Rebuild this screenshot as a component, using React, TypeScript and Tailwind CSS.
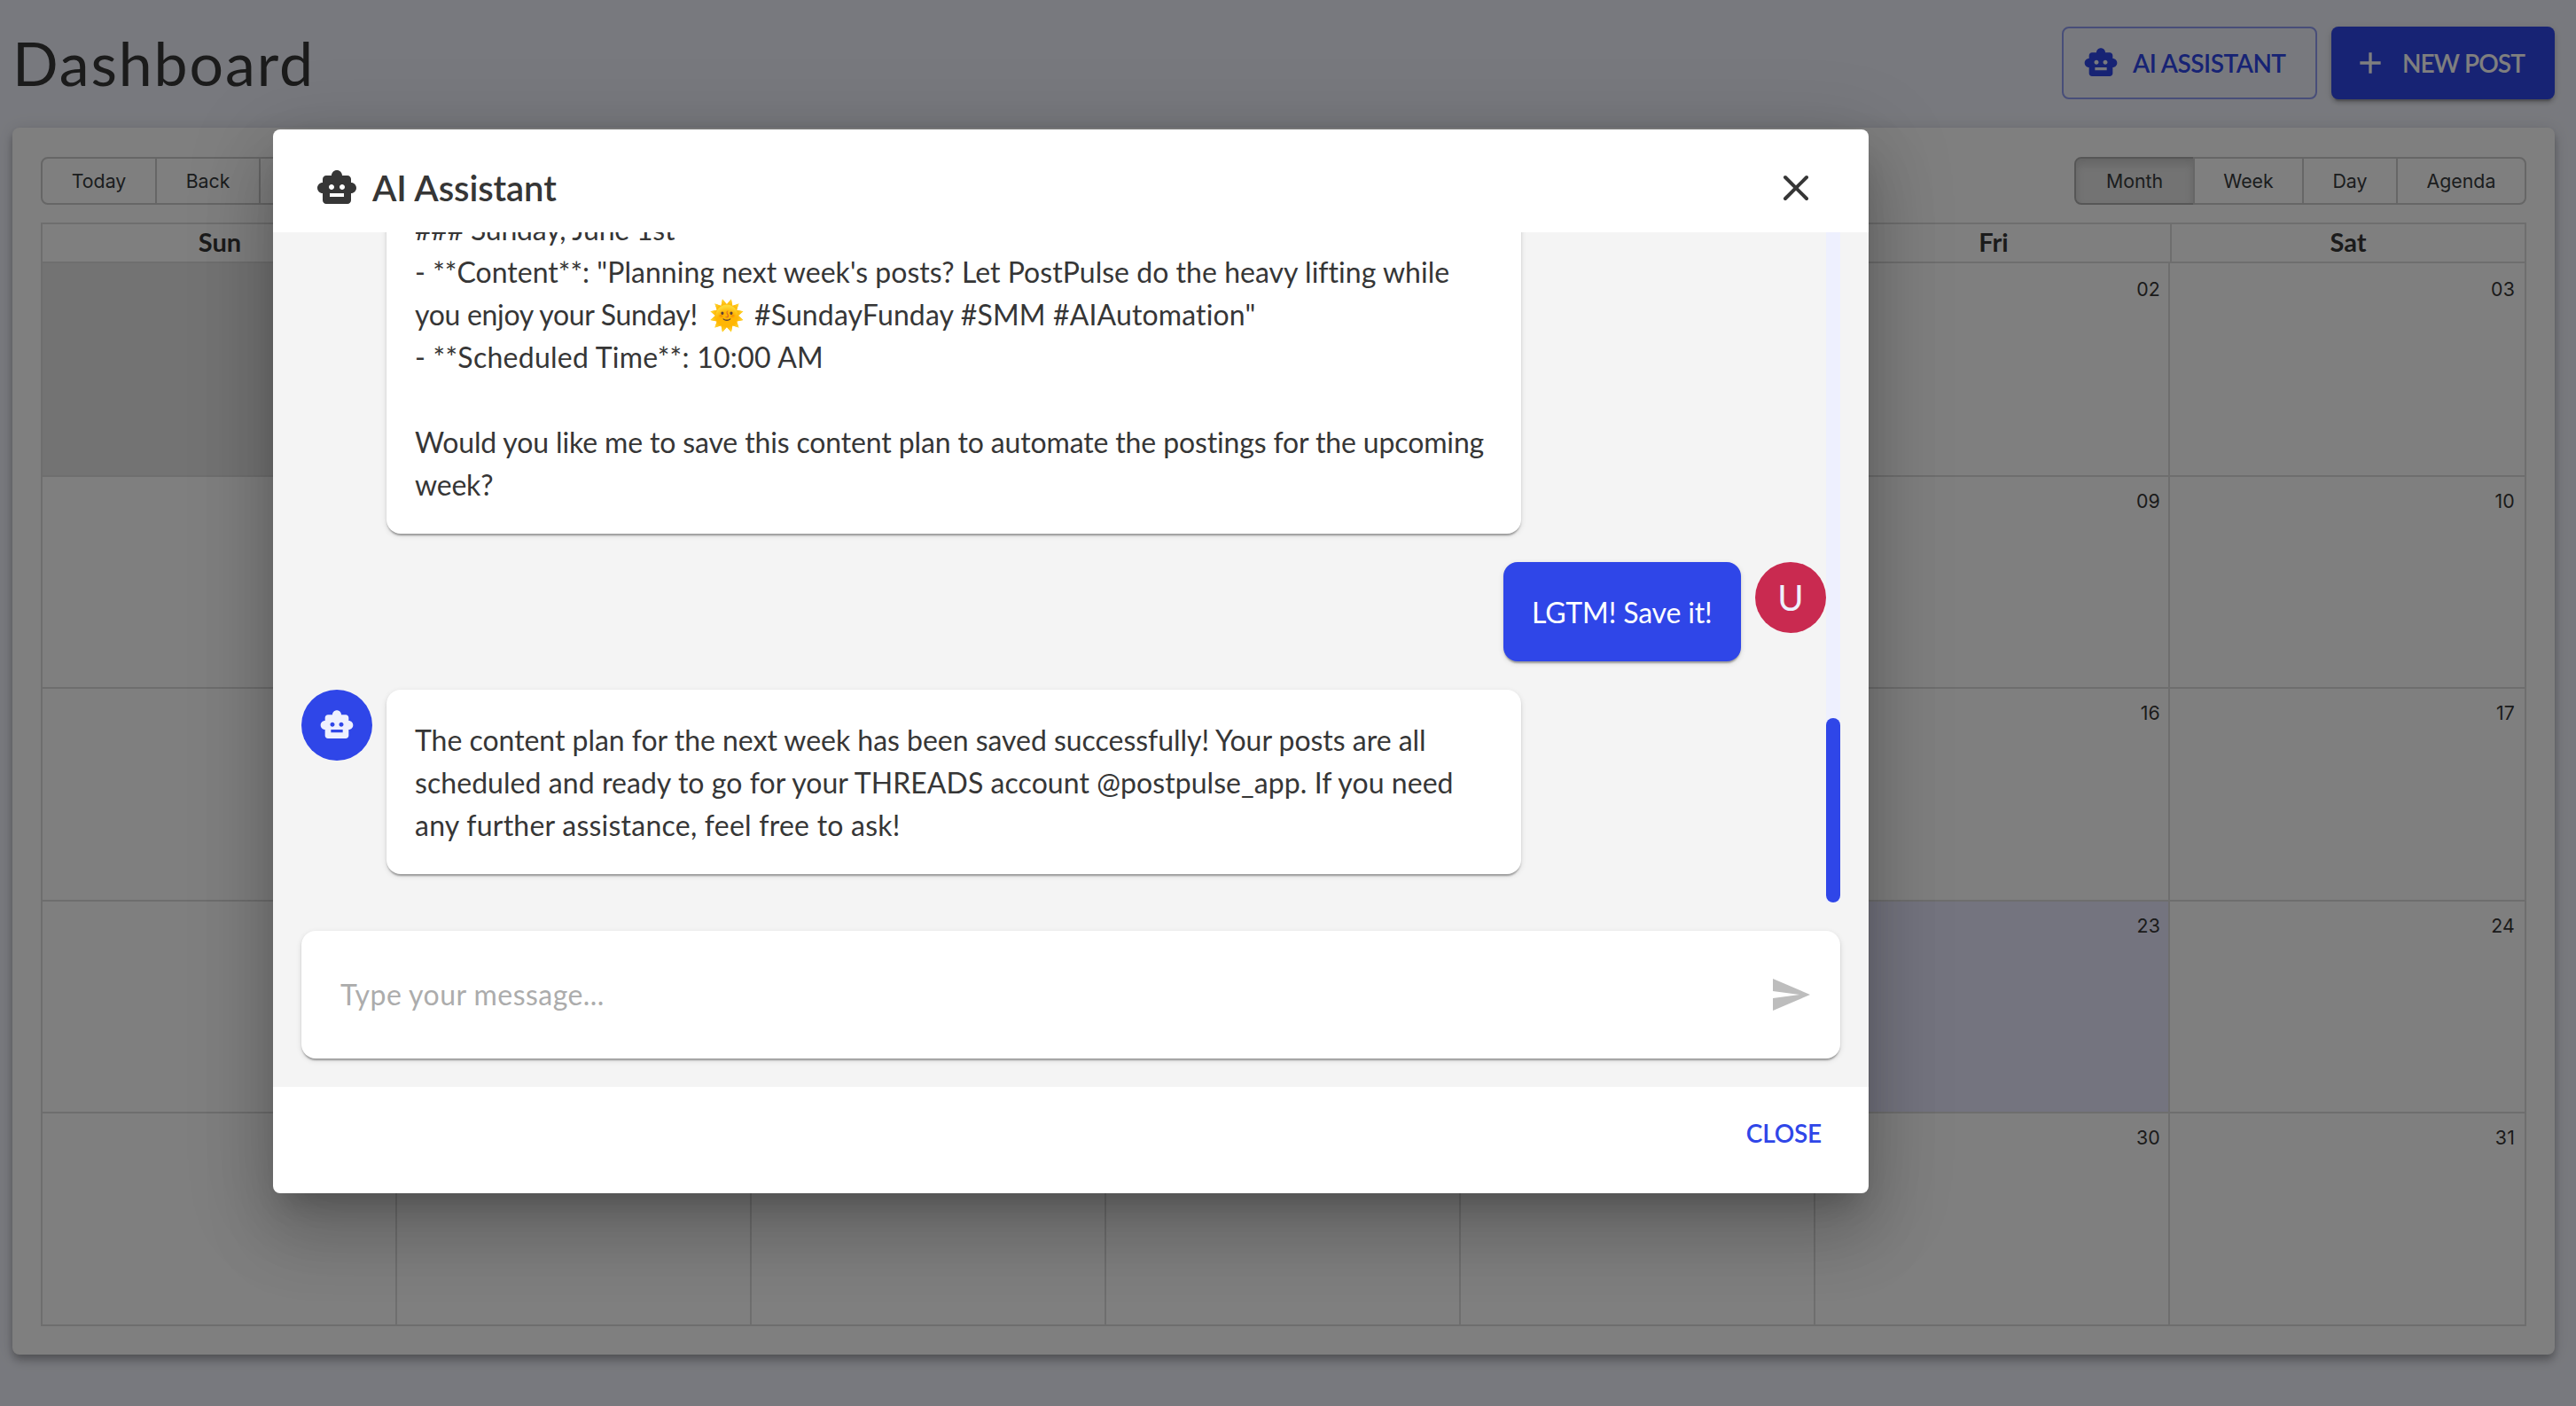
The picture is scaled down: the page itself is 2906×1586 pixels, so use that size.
import clsx from "clsx";
import { X } from "lucide-react";
import { MdAdd, MdSend, MdSmartToy } from "react-icons/md";

const weekDays = ['Sun', 'Mon', 'Tue', 'Wed', 'Thu', 'Fri', 'Sat'];

const weeks = [
  ['27', '28', '29', '30', '01', '02', '03'],
  ['04', '05', '06', '07', '08', '09', '10'],
  ['11', '12', '13', '14', '15', '16', '17'],
  ['18', '19', '20', '21', '22', '23', '24'],
  ['25', '26', '27', '28', '29', '30', '31'],
];

const TODAY = '23';

const paperShadow = 'shadow-[0_4px_2px_-2px_rgba(0,0,0,0.2),0_2px_2px_0_rgba(0,0,0,0.14),0_2px_6px_0_rgba(0,0,0,0.12)]';

interface ToolbarButtonProps {
  label: string;
  className: string;
  active?: boolean;
}

const ToolbarButton: React.FC<ToolbarButtonProps> = ({ label, className, active }) => (
  <button
    className={clsx(
      'h-[54px] border-2 pt-0.5 text-center text-[21.3px] text-[#373a3c] -ml-0.5 first:ml-0 first:rounded-l-lg last:rounded-r-lg',
      active
        ? 'border-[#adadad] bg-[#e6e6e6] shadow-[inset_0_6px_10px_rgba(0,0,0,0.125)]'
        : 'border-[#ccc]',
      className
    )}
  >
    {label}
  </button>
);

const Calendar = () => {
  return (
    <div className="
      mt-8
      flex
      h-[1384px]
      flex-col
      rounded-lg
      bg-white
      px-8
      pb-8
      pt-[33px]
      shadow-[0_4px_8px_-2px_rgba(0,0,0,0.2),0_8px_10px_0_rgba(0,0,0,0.14),0_2px_20px_0_rgba(0,0,0,0.12)]
    ">
      <div className="mb-5 flex items-center justify-between font-['Inter',sans-serif]">
        <div className="flex">
          <ToolbarButton label="Today" className="w-[131px]" />
          <ToolbarButton label="Back" className="w-[119px]" />
          <ToolbarButton label="Next" className="w-[117px]" />
        </div>
        <div className="flex">
          <ToolbarButton label="Month" className="w-[136px]" active />
          <ToolbarButton label="Week" className="w-[125px]" />
          <ToolbarButton label="Day" className="w-[108px]" />
          <ToolbarButton label="Agenda" className="w-[147px]" />
        </div>
      </div>

      <div className="flex flex-1 flex-col border-2 border-[#ddd]">
        <div className="grid h-11 grid-cols-7 border-b-2 border-[#ddd]">
          {weekDays.map((day) => (
            <div
              key={day}
              className="border-l-2 border-[#ddd] text-center text-[29px] font-bold leading-[39px] text-[#373737] first:border-l-0"
            >
              {day}
            </div>
          ))}
        </div>
        <div className="grid flex-1 grid-rows-[239px_239px_240px_239px_1fr]">
          {weeks.map((week, row) => (
            <div key={row} className="grid grid-cols-7 border-t-2 border-[#ddd] first:border-t-0">
              {week.map((date, col) => {
                const offRange = row === 0 && col < 4;
                return (
                  <div
                    key={date}
                    className={clsx(
                      "border-r-2 border-[#ddd] pr-[9px] text-right font-['Inter',sans-serif] text-[21.3px] leading-8 tracking-[0.2px] last:border-r-0 last:pr-[11px]",
                      row === 0 ? 'pt-[13px]' : 'pt-[11px]',
                      offRange ? 'bg-[#e6e6e6] text-[#999]' : 'text-[#373737]',
                      date === TODAY && 'bg-[#e8e8fe]'
                    )}
                  >
                    {date}
                  </div>
                );
              })}
            </div>
          ))}
        </div>
      </div>
    </div>
  );
};

interface MessageBoxProps {
  isOwn?: boolean;
  children: React.ReactNode;
}

const MessageBox: React.FC<MessageBoxProps> = ({ isOwn, children }) => (
  <div className={clsx('flex shrink-0 items-start gap-4', isOwn && 'flex-row-reverse')}>
    <div
      className={clsx(
        'flex size-20 shrink-0 items-center justify-center rounded-full text-[40px] text-[#eef0fe]',
        isOwn ? 'bg-[#c92a50]' : 'bg-[#2f46e8]'
      )}
    >
      {isOwn ? 'U' : <MdSmartToy size={40} />}
    </div>
    <div
      className={clsx(
        'whitespace-nowrap rounded-2xl px-8 pb-[31px] pt-[33px] text-[32px] leading-[48px]',
        paperShadow,
        isOwn ? 'w-[268px] bg-[#2f46e8] text-white' : 'w-[1280px] bg-white text-[#363636]'
      )}
    >
      {children}
    </div>
  </div>
);

const AssistantDialog = () => {
  return (
    <div className="
      flex
      h-[1200px]
      w-[1800px]
      flex-col
      overflow-hidden
      rounded-lg
      bg-white
      shadow-[0_22px_30px_-14px_rgba(0,0,0,0.2),0_48px_76px_6px_rgba(0,0,0,0.14),0_18px_92px_16px_rgba(0,0,0,0.12)]
    ">
      <div className="flex h-[116px] items-center gap-4 pl-12 pr-[58px] pt-4 text-[#363636]">
        <MdSmartToy size={48} />
        <div className="flex-1 pb-px text-[40px] font-semibold leading-[48px] tracking-[-0.1px]">AI Assistant</div>
        <X size={48} strokeWidth={2} />
      </div>

      <div className="flex h-[964px] flex-col bg-[#f4f4f4] px-8 pb-8">
        <div className="flex h-[756px]">
          <div className="flex flex-1 flex-col justify-end gap-8 overflow-hidden pb-8 -ml-8 pl-8">
            <MessageBox>
              {/* room for the part of the plan that is scrolled away */}
              <div className="h-24" />
              <div className="tracking-[-0.22px]">### Sunday, June 1st</div>
              <div className="tracking-[0.03px]">
                - **Content**: "Planning next week's posts? Let PostPulse do the heavy lifting while
              </div>
              <div className="flex h-12">
                <span className="w-[322px] tracking-[-0.32px]">you enjoy your Sunday!</span>
                <span className="ml-2.5 w-[51px]">🌞</span>
                <span className="tracking-[0.14px]">#SundayFunday #SMM #AIAutomation"</span>
              </div>
              <div className="tracking-[0.27px]">- **Scheduled Time**: 10:00 AM</div>
              <div className="h-12" />
              <div className="tracking-[-0.14px]">
                Would you like me to save this content plan to automate the postings for the upcoming
              </div>
              <div className="tracking-[-0.2px]">week?</div>
            </MessageBox>
            <MessageBox isOwn>
              <div className="tracking-[-0.15px]">LGTM! Save it!</div>
            </MessageBox>
            <MessageBox>
              <div className="tracking-[-0.03px]">
                The content plan for the next week has been saved successfully! Your posts are all
              </div>
              <div className="tracking-[0.06px]">
                scheduled and ready to go for your THREADS account @postpulse_app. If you need
              </div>
              <div className="tracking-[0.24px]">any further assistance, feel free to ask!</div>
            </MessageBox>
          </div>
          <div className="flex w-4 flex-col justify-end bg-[#eef0fe]">
            <div className="h-[208px] rounded-full bg-[#2f46e8]" />
          </div>
        </div>

        <div className={clsx('mt-8 flex h-36 items-center rounded-2xl bg-white pl-11 pr-8', paperShadow)}>
          <input
            className="flex-1 pb-px text-[32px] tracking-[0.45px] outline-none placeholder:text-[#acacac]"
            placeholder="Type your message..."
          />
          <MdSend size={48} className="text-[#bdbdbd]" />
        </div>
      </div>

      <div className="flex justify-end pr-[53px] pt-7">
        <button className="text-[28px] font-semibold leading-[48px] tracking-[-0.2px] text-[#2f46e8]">CLOSE</button>
      </div>
    </div>
  );
};

export default function App() {
  return (
    <div className="relative h-[1586px] w-[2906px] overflow-hidden bg-[#f1f3fc] pl-3.5 pr-6 pt-[30px] font-['Lato',sans-serif]">
      <div className="flex h-[82px] items-center justify-between">
        <h1 className="pb-px text-[68px] leading-[82px] tracking-[1.9px] text-[#373737]">Dashboard</h1>
        <div className="flex gap-4">
          <button className="
            flex
            h-[82px]
            w-[288px]
            items-center
            gap-4
            rounded-lg
            border-2
            border-[#2f46e8]/50
            pl-[22px]
            text-[28px]
            font-semibold
            tracking-[-0.5px]
            text-[#2f46e8]
          ">
            <MdSmartToy size={40} />
            AI ASSISTANT
          </button>
          <button className="
            flex
            h-[82px]
            w-[252px]
            items-center
            gap-4
            rounded-lg
            bg-[#2f46e8]
            pl-6
            text-[28px]
            font-semibold
            tracking-[-0.9px]
            text-white
            shadow-[0_6px_2px_-4px_rgba(0,0,0,0.2),0_4px_4px_0_rgba(0,0,0,0.14),0_2px_10px_0_rgba(0,0,0,0.12)]
          ">
            <MdAdd size={40} />
            NEW POST
          </button>
        </div>
      </div>

      <Calendar />

      {/* modal backdrop */}
      <div className="absolute inset-0 flex items-start bg-black/50 pl-[308px] pt-[146px]">
        <AssistantDialog />
      </div>
    </div>
  );
}
